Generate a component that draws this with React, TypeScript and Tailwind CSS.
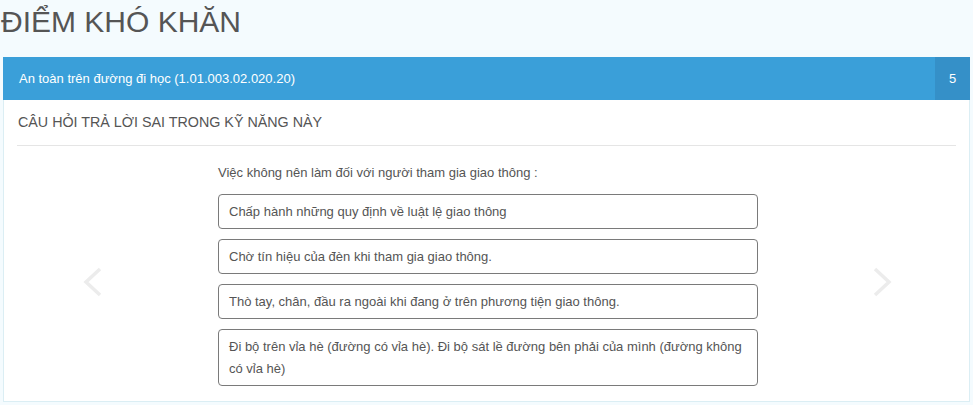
import React from "react";

const options = [
  "Chấp hành những quy định về luật lệ giao thông",
  "Chờ tín hiệu của đèn khi tham gia giao thông.",
  "Thò tay, chân, đầu ra ngoài khi đang ở trên phương tiện giao thông.",
  "Đi bộ trên vỉa hè (đường có vỉa hè). Đi bộ sát lề đường bên phải của mình (đường không có vỉa hè)",
];

export default function App() {
  return (
    <div
      className="w-[973px] h-[405px] overflow-hidden bg-[#f4fbfe] text-[#555]"
      style={{ fontFamily: '"Liberation Sans", Arial, sans-serif' }}
    >
      <h1 className="pl-[1px] pt-[3px] h-[57px] text-[30px] leading-[38px] text-[#555] font-normal">
        ĐIỂM KHÓ KHĂN
      </h1>
      <div className="ml-[3px] w-[967px] border border-[#dbeef4] bg-white">
        <div className="flex h-[43px] items-stretch bg-[#3a9fd9] text-white -m-[1px]">
          <div className="flex-1 flex items-center pl-[16px] text-[13px]">
            An toàn trên đường đi học (1.01.003.02.020.20)
          </div>
          <div className="w-[35px] flex items-center justify-center bg-[#3590c8] text-[13px]">
            5
          </div>
        </div>
        <div className="px-[13px]">
          <div className="h-[47px] flex items-center pl-[1px] pt-[2px] text-[14.3px] text-[#555] border-b border-[#e5e5e5]">
            CÂU HỎI TRẢ LỜI SAI TRONG KỸ NĂNG NÀY
          </div>
          <div className="relative flex justify-center pt-[17px] pb-[15px]">
            <div className="absolute left-[64px] top-[120px]">
              <svg width="24" height="32" viewBox="0 0 24 32">
                <path d="M19 3 L5 16 L19 29" fill="none" stroke="#ececec" strokeWidth="3.5" />
              </svg>
            </div>
            <div className="absolute right-[62px] top-[120px]">
              <svg width="24" height="32" viewBox="0 0 24 32">
                <path d="M5 3 L19 16 L5 29" fill="none" stroke="#ececec" strokeWidth="3.5" />
              </svg>
            </div>
            <div className="w-[540px] ml-[3px]">
              <div className="text-[13px] leading-[20px] mb-[11px]">
                Việc không nên làm đối với người tham gia giao thông :
              </div>
              <div className="flex flex-col gap-[10px]">
                {options.map((o) => (
                  <div
                    key={o}
                    className="border border-[#7a7a7a] rounded-[4px] px-[10px] pt-[6px] pb-[5px] text-[13px] leading-[22px] text-[#555]"
                  >
                    {o}
                  </div>
                ))}
              </div>
            </div>
          </div>
        </div>
      </div>
    </div>
  );
}
